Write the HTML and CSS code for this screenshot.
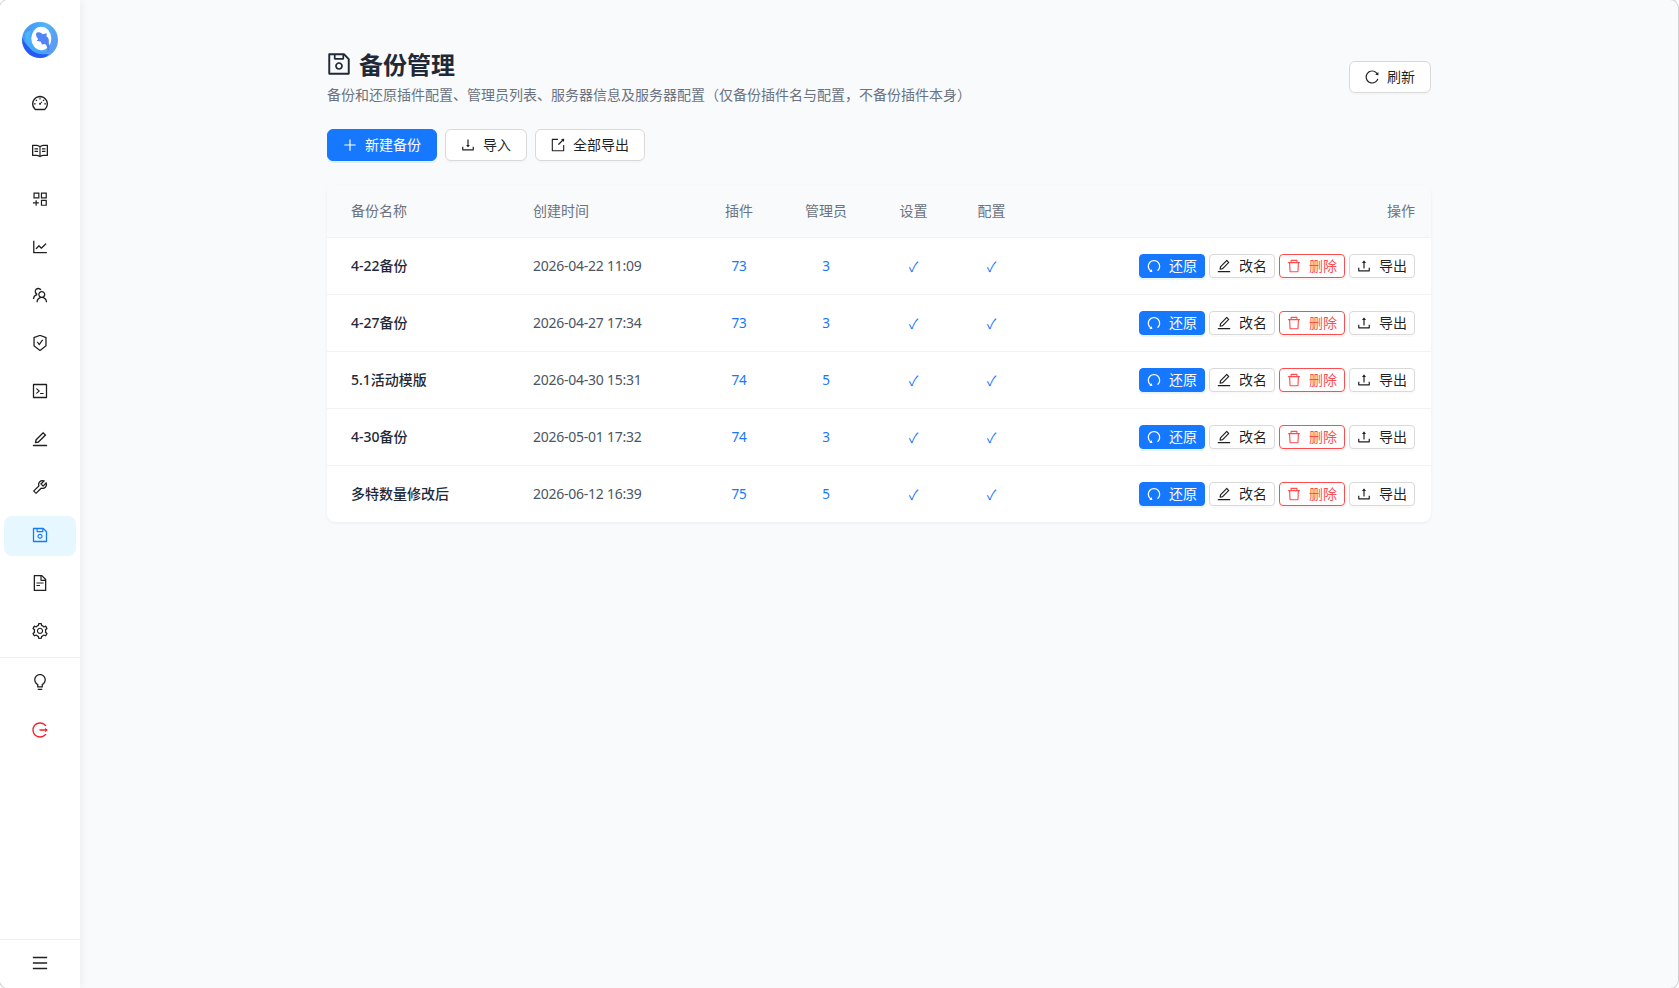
FILE: index.html
```html
<!DOCTYPE html>
<html lang="zh-CN">
<head>
<meta charset="UTF-8">
<meta name="viewport" content="width=device-width, initial-scale=1.0">
<title>备份管理</title>
<link rel="stylesheet" href="styles.css">
</head>
<body>
<svg class="sprite" xmlns="http://www.w3.org/2000/svg">
  <symbol id="i-dashboard" viewBox="64 64 896 896"><path d="M924.8 385.6a446.7 446.7 0 00-96-142.4 446.7 446.7 0 00-142.4-96C631.1 123.8 572.5 112 512 112s-119.1 11.8-174.4 35.2a446.7 446.7 0 00-142.4 96 446.7 446.7 0 00-96 142.4C75.8 440.9 64 499.5 64 560c0 132.7 58.3 257.7 159.9 343.1l1.7 1.4c5.8 4.8 13.1 7.5 20.6 7.5h531.7c7.5 0 14.8-2.7 20.6-7.5l1.7-1.4C901.7 817.7 960 692.7 960 560c0-60.5-11.9-119.1-35.2-174.4zM761.4 836H262.6A371.12 371.12 0 01140 560c0-99.4 38.7-192.8 109-263 70.3-70.3 163.7-109 263-109 99.4 0 192.8 38.7 263 109 70.3 70.3 109 163.7 109 263 0 105.6-44.5 205.5-122.6 276zM623.5 421.5a8.03 8.03 0 00-11.3 0L527.7 506c-18.7-5-39.4-.2-54.1 14.5a55.95 55.95 0 000 79.2 55.95 55.95 0 0079.2 0 55.87 55.87 0 0014.5-54.1l84.5-84.5c3.1-3.1 3.1-8.2 0-11.3l-28.3-28.3zM490 320h44c4.4 0 8-3.6 8-8v-80c0-4.4-3.6-8-8-8h-44c-4.4 0-8 3.6-8 8v80c0 4.4 3.6 8 8 8zm260 218v44c0 4.4 3.6 8 8 8h80c4.4 0 8-3.6 8-8v-44c0-4.4-3.6-8-8-8h-80c-4.4 0-8 3.6-8 8zm12.7-197.2l-31.1-31.1a8.03 8.03 0 00-11.3 0l-56.6 56.6a8.03 8.03 0 000 11.3l31.1 31.1c3.1 3.1 8.2 3.1 11.3 0l56.6-56.6c3.1-3.1 3.1-8.2 0-11.3zm-458.6-31.1a8.03 8.03 0 00-11.3 0l-31.1 31.1a8.03 8.03 0 000 11.3l56.6 56.6c3.1 3.1 8.2 3.1 11.3 0l31.1-31.1c3.1-3.1 3.1-8.2 0-11.3l-56.6-56.6zM262 530h-80c-4.4 0-8 3.6-8 8v44c0 4.4 3.6 8 8 8h80c4.4 0 8-3.6 8-8v-44c0-4.4-3.6-8-8-8z"/></symbol>
  <symbol id="i-read" viewBox="64 64 896 896"><path d="M928 161H699.2c-49.1 0-97.1 14.1-138.4 40.7L512 233l-48.8-31.3A255.2 255.2 0 00324.8 161H96c-17.7 0-32 14.3-32 32v568c0 17.7 14.3 32 32 32h228.8c49.1 0 97.1 14.1 138.4 40.7l44.4 28.6c1.3.8 2.8 1.3 4.3 1.3s3-.4 4.3-1.3l44.4-28.6C602 807.1 650.1 793 699.2 793H928c17.7 0 32-14.3 32-32V193c0-17.7-14.3-32-32-32zM324.8 721H136V233h188.8c35.4 0 69.8 10.1 99.5 29.2l48.8 31.3 6.9 4.5v462c-47.6-25.6-100.8-39-155.2-39zm563.2 0H699.2c-54.4 0-107.6 13.4-155.2 39V298l6.9-4.5 48.8-31.3c29.7-19.1 64.1-29.2 99.5-29.2H888v488zM396.9 361H211.1c-3.9 0-7.1 3.4-7.1 7.5v45c0 4.1 3.2 7.5 7.1 7.5h185.7c3.9 0 7.1-3.4 7.1-7.5v-45c.1-4.1-3.1-7.5-7-7.5zm223.1 7.5v45c0 4.1 3.2 7.5 7.1 7.5h185.7c3.9 0 7.1-3.4 7.1-7.5v-45c0-4.1-3.2-7.5-7.1-7.5H627.1c-3.9 0-7.1 3.4-7.1 7.5zM396.9 501H211.1c-3.9 0-7.1 3.4-7.1 7.5v45c0 4.1 3.2 7.5 7.1 7.5h185.7c3.9 0 7.1-3.4 7.1-7.5v-45c.1-4.1-3.1-7.5-7-7.5zm416 0H627.1c-3.9 0-7.1 3.4-7.1 7.5v45c0 4.1 3.2 7.5 7.1 7.5h185.7c3.9 0 7.1-3.4 7.1-7.5v-45c.1-4.1-3.1-7.5-7-7.5z"/></symbol>
  <symbol id="i-apps" viewBox="64 64 896 896"><path fill-rule="evenodd" d="M160 144h304q16 0 16 16v304q0 16-16 16H160q-16 0-16-16V160q0-16 16-16zm52 68v200h200V212zM576 144h304q16 0 16 16v304q0 16-16 16H576q-16 0-16-16V160q0-16 16-16zm52 68v200h200V212zM576 560h304q16 0 16 16v304q0 16-16 16H576q-16 0-16-16V576q0-16 16-16zm52 68v200h200V628zM262 584h68v114h116v68H330v118h-68V766H114v-68h148z"/></symbol>
  <symbol id="i-chart" viewBox="64 64 896 896"><path d="M888 792H200V168c0-4.4-3.6-8-8-8h-56c-4.4 0-8 3.6-8 8v688c0 4.4 3.6 8 8 8h752c4.4 0 8-3.6 8-8v-56c0-4.4-3.6-8-8-8zM305.8 637.7c3.1 3.1 8.1 3.1 11.3 0l138.3-137.6L583 628.5c3.1 3.1 8.2 3.1 11.3 0l275.4-275.3c3.1-3.1 3.1-8.2 0-11.3l-39.6-39.6a8.03 8.03 0 00-11.3 0l-230 229.9L461.4 404a8.03 8.03 0 00-11.3 0L266.3 586.7a8.03 8.03 0 000 11.3l39.5 39.7z"/></symbol>
  <symbol id="i-team" viewBox="64 64 896 896"><path d="M824.2 699.9a301.55 301.55 0 00-86.4-60.4C783.1 602.8 812 546.8 812 484c0-110.8-92.4-201.7-203.2-200-109.1 1.7-197 90.6-197 200 0 62.8 29 118.8 74.2 155.5a300.95 300.95 0 00-86.4 60.4C345 754.6 314 826.8 312 903.8a8 8 0 008 8.2h56c4.3 0 7.9-3.4 8-7.7 1.9-58 25.4-112.3 66.7-153.5A226.62 226.62 0 01612 684c60.9 0 118.2 23.7 161.3 66.8C814.6 792 838 846.3 840 904.3c.1 4.3 3.7 7.7 8 7.7h56a8 8 0 008-8.2c-2-77-33-149.2-87.8-203.9zM612 612c-34.2 0-66.4-13.3-90.5-37.5a126.86 126.86 0 01-37.5-91.8c.3-32.8 13.4-64.5 36.3-88 24-24.6 56.1-38.3 90.4-38.7 33.9-.3 66.8 12.9 91 36.6 24.8 24.3 38.4 56.8 38.4 91.4 0 34.2-13.3 66.3-37.5 90.5A127.3 127.3 0 01612 612zM361.5 510.4c-.9-8.7-1.4-17.5-1.4-26.4 0-15.9 1.5-31.4 4.3-46.5.7-3.6-1.2-7.3-4.5-8.8-13.6-6.1-26.1-14.5-36.9-25.1a127.54 127.54 0 01-38.7-95.4c.9-32.1 13.8-62.6 36.3-85.6 24.7-25.3 57.9-39.1 93.2-38.7 31.9.3 62.7 12.6 86 34.4 7.9 7.4 14.7 15.6 20.4 24.4 2 3.1 5.9 4.4 9.3 3.2 17.6-6.1 36.2-10.4 55.3-12.4 5.6-.6 8.8-6.6 6.3-11.6-32.5-64.3-98.9-108.7-175.7-109.9-110.9-1.7-203.3 89.2-203.3 199.9 0 62.8 28.9 118.8 74.2 155.5-31.8 14.7-61.1 35-86.5 60.4-54.8 54.7-85.8 126.9-87.8 204a8 8 0 008 8.2h56.1c4.3 0 7.9-3.4 8-7.7 1.9-58 25.4-112.3 66.7-153.5 29.4-29.4 65.4-49.8 104.7-59.7 3.9-1 6.5-4.7 6-8.7z"/></symbol>
  <symbol id="i-shield" viewBox="64 64 896 896"><path d="M866.9 169.9L527.1 54.1C523 52.7 517.5 52 512 52s-11 .7-15.1 2.1L157.1 169.9c-8.3 2.8-15.1 12.4-15.1 21.2v482.4c0 8.8 5.7 20.4 12.6 25.9L499.3 968c3.5 2.7 8 4.1 12.6 4.1s9.2-1.4 12.6-4.1l344.7-268.6c6.9-5.4 12.6-17 12.6-25.9V191.1c.2-8.8-6.6-18.3-14.9-21.2zM810 654.3L512 886.5 214 654.3V226.7l298-101.6 298 101.6v427.6zm-405.8-201c-3-4.1-7.8-6.6-13-6.6H336c-6.5 0-10.3 7.4-6.5 12.7l126.4 174a16.1 16.1 0 0026 0l212.6-292.7c3.8-5.3 0-12.7-6.5-12.7h-55.2c-5.1 0-10 2.5-13 6.6L468.9 542.4l-64.7-89.1z"/></symbol>
  <symbol id="i-code" viewBox="64 64 896 896"><path d="M516 673c0 4.4 3.4 8 7.5 8h185c4.1 0 7.5-3.6 7.5-8v-48c0-4.4-3.4-8-7.5-8h-185c-4.1 0-7.5 3.6-7.5 8v48zm-194.9 6.1l192-161c3.8-3.2 3.8-9.1 0-12.3l-192-160.9A7.95 7.95 0 00308 351v62.7c0 2.4 1 4.6 2.9 6.1L420.7 512l-109.8 92.2a8.1 8.1 0 00-2.9 6.1V673c0 6.8 7.9 10.5 13.1 6.1zM880 112H144c-17.7 0-32 14.3-32 32v736c0 17.7 14.3 32 32 32h736c17.7 0 32-14.3 32-32V144c0-17.7-14.3-32-32-32zm-40 728H184V184h656v656z"/></symbol>
  <symbol id="i-edit" viewBox="64 64 896 896"><path d="M257.7 752c2 0 4-.2 6-.5L431.9 722c2-.4 3.9-1.3 5.3-2.8l423.9-423.9a9.96 9.96 0 000-14.1L694.9 114.9c-1.9-1.9-4.4-2.9-7.1-2.9s-5.2 1-7.1 2.9L256.8 538.8c-1.5 1.5-2.4 3.3-2.8 5.3l-29.5 168.2a33.5 33.5 0 009.4 29.8c6.6 6.4 14.9 9.9 23.8 9.9zm67.4-174.4L687.8 215l73.3 73.3-362.7 362.6-88.9 15.7 15.6-89zM880 836H144c-17.7 0-32 14.3-32 32v36c0 4.4 3.6 8 8 8h784c4.4 0 8-3.6 8-8v-36c0-17.7-14.3-32-32-32z"/></symbol>
  <symbol id="i-tool" viewBox="64 64 896 896"><path d="M876.6 239.5c-.5-.9-1.2-1.8-2-2.5-5-5-13.1-5-18.1 0L684.2 409.3l-67.9-67.9L788.7 169c.8-.8 1.4-1.6 2-2.5 3.6-6.1 1.6-13.9-4.5-17.5-98.2-58-226.8-44.7-311.3 39.7-67 67-89.2 162-66.5 247.4l-293 293c-3 3-2.8 7.9.3 11l169.7 169.7c3.1 3.1 8.1 3.3 11 .3l292.9-292.9c85.5 22.8 180.5.7 247.6-66.4 84.4-84.5 97.7-213.1 39.7-311.3zM786 499.8c-58.1 58.1-145.3 69.3-214.6 33.6l-8.8 8.8-.1-.1-274 274.1-79.2-79.2 230.1-230.1s0 .1.1.1l52.8-52.8c-35.7-69.3-24.5-156.5 33.6-214.6a184.2 184.2 0 01144-53.5L537 318.9a32.05 32.05 0 000 45.3l124.5 124.5a32.05 32.05 0 0045.3 0l132.8-132.8c3.7 51.8-14.4 104.8-53.6 143.9z"/></symbol>
  <symbol id="i-save" viewBox="64 64 896 896"><path d="M893.3 293.3L730.7 130.7c-7.5-7.5-16.7-13-26.7-16V112H144c-17.7 0-32 14.3-32 32v736c0 17.7 14.3 32 32 32h736c17.7 0 32-14.3 32-32V338.5c0-17-6.7-33.2-18.7-45.2zM384 184h256v104H384V184zm456 656H184V184h136v136c0 17.7 14.3 32 32 32h320c17.7 0 32-14.3 32-32V205.8l136 136V840zM512 442c-79.5 0-144 64.5-144 144s64.5 144 144 144 144-64.5 144-144-64.5-144-144-144zm0 224c-44.2 0-80-35.8-80-80s35.8-80 80-80 80 35.8 80 80-35.8 80-80 80z"/></symbol>
  <symbol id="i-file" viewBox="64 64 896 896"><path d="M854.6 288.6L639.4 73.4c-6-6-14.1-9.4-22.6-9.4H192c-17.7 0-32 14.3-32 32v832c0 17.7 14.3 32 32 32h640c17.7 0 32-14.3 32-32V311.3c0-8.5-3.4-16.7-9.4-22.7zM790.2 326H602V137.8L790.2 326zm1.8 562H232V136h302v216a42 42 0 0042 42h216v494zM504 618H320c-4.4 0-8 3.6-8 8v48c0 4.4 3.6 8 8 8h184c4.4 0 8-3.6 8-8v-48c0-4.4-3.6-8-8-8zM312 490v48c0 4.4 3.6 8 8 8h384c4.4 0 8-3.6 8-8v-48c0-4.4-3.6-8-8-8H320c-4.4 0-8 3.6-8 8z"/></symbol>
  <symbol id="i-setting" viewBox="64 64 896 896"><path d="M924.8 625.7l-65.5-56c3.1-19 4.7-38.4 4.7-57.8s-1.6-38.8-4.7-57.8l65.5-56a32.03 32.03 0 009.3-35.2l-.9-2.6a443.74 443.74 0 00-79.7-137.9l-1.8-2.1a32.12 32.12 0 00-35.1-9.5l-81.3 28.9c-30-24.6-63.5-44-99.7-57.6l-15.7-85a32.05 32.05 0 00-25.8-25.7l-2.7-.5c-52.1-9.4-106.9-9.4-159 0l-2.7.5a32.05 32.05 0 00-25.8 25.7l-15.8 85.4a351.86 351.86 0 00-99 57.4l-81.9-29.1a32 32 0 00-35.1 9.5l-1.8 2.1a446.02 446.02 0 00-79.7 137.9l-.9 2.6c-4.5 12.5-.8 26.5 9.3 35.2l66.3 56.6c-3.1 18.8-4.6 38-4.6 57.1 0 19.2 1.5 38.4 4.6 57.1L99 625.5a32.03 32.03 0 00-9.3 35.2l.9 2.6c18.1 50.4 44.9 96.9 79.7 137.9l1.8 2.1a32.12 32.12 0 0035.1 9.5l81.9-29.1c29.8 24.5 63.1 43.9 99 57.4l15.8 85.4a32.05 32.05 0 0025.8 25.7l2.7.5a449.4 449.4 0 00159 0l2.7-.5a32.05 32.05 0 0025.8-25.7l15.7-85a350 350 0 0099.7-57.6l81.3 28.9a32 32 0 0035.1-9.5l1.8-2.1c34.8-41.1 61.6-87.5 79.7-137.9l.9-2.6c4.5-12.3.8-26.3-9.3-35zM788.3 465.9c2.5 15.1 3.8 30.6 3.8 46.1s-1.3 31-3.8 46.1l-6.6 40.1 74.7 63.9a370.03 370.03 0 01-42.6 73.6L721 702.8l-31.4 25.8c-23.9 19.6-50.5 35-79.3 45.8l-38.1 14.3-17.9 97a377.5 377.5 0 01-85 0l-17.9-97.2-37.8-14.5c-28.5-10.8-55-26.2-78.7-45.7l-31.4-25.9-93.4 33.2c-17-22.9-31.2-47.6-42.6-73.6l75.5-64.5-6.5-40c-2.4-14.9-3.7-30.3-3.7-45.5 0-15.3 1.2-30.6 3.7-45.5l6.5-40-75.5-64.5c11.3-26.1 25.6-50.7 42.6-73.6l93.4 33.2 31.4-25.9c23.7-19.5 50.2-34.9 78.7-45.7l37.9-14.3 17.9-97.2c28.1-3.2 56.8-3.2 85 0l17.9 97 38.1 14.3c28.7 10.8 55.4 26.2 79.3 45.8l31.4 25.8 92.8-32.9c17 22.9 31.2 47.6 42.6 73.6L781.8 426l6.5 39.9zM512 326c-97.2 0-176 78.8-176 176s78.8 176 176 176 176-78.8 176-176-78.8-176-176-176zm79.2 255.2A111.6 111.6 0 01512 614c-29.9 0-58-11.7-79.2-32.8A111.6 111.6 0 01400 502c0-29.9 11.7-58 32.8-79.2C454 401.6 482.1 390 512 390c29.9 0 58 11.6 79.2 32.8A111.6 111.6 0 01624 502c0 29.9-11.7 58-32.8 79.2z"/></symbol>
  <symbol id="i-bulb" viewBox="64 64 896 896"><path d="M632 888H392c-4.4 0-8 3.6-8 8v32c0 17.7 14.3 32 32 32h192c17.7 0 32-14.3 32-32v-32c0-4.4-3.6-8-8-8zM512 64c-181.1 0-328 146.9-328 328 0 121.4 66 227.4 164 284.1V792c0 17.7 14.3 32 32 32h264c17.7 0 32-14.3 32-32V676.1c98-56.7 164-162.7 164-284.1 0-181.1-146.9-328-328-328zm127.9 549.8L604 634.6V752H420V634.6l-35.9-20.8C305.4 568.3 256 484.5 256 392c0-141.4 114.6-256 256-256s256 114.6 256 256c0 92.5-49.4 176.3-128.1 221.8z"/></symbol>
  <symbol id="i-logout" viewBox="64 64 896 896"><path d="M868 732h-70.3c-4.8 0-9.3 2.1-12.3 5.8-7 8.5-14.5 16.7-22.4 24.5a353.84 353.84 0 01-112.7 75.9A352.8 352.8 0 01512.4 866c-47.9 0-94.3-9.4-137.9-27.8a353.84 353.84 0 01-112.7-75.9 353.28 353.28 0 01-76-112.5C167.3 606.2 158 559.9 158 512s9.4-94.2 27.8-137.8c17.8-42.1 43.4-80 76-112.5s70.5-58.1 112.7-75.9c43.6-18.4 90-27.8 137.9-27.8 47.9 0 94.3 9.3 137.9 27.8 42.2 17.8 80.1 43.4 112.7 75.9 7.9 7.9 15.3 16.1 22.4 24.5 3 3.7 7.6 5.8 12.3 5.8H868c6.3 0 10.2-7 6.7-12.3C798 160.5 663.8 81.6 511.3 82 271.7 82.6 79.6 277.1 82 516.4 84.4 751.9 276.2 942 512.4 942c152.1 0 285.7-78.8 362.3-197.7 3.4-5.3-.4-12.3-6.7-12.3zm88.9-226.3L815 393.7c-5.3-4.2-13-.4-13 6.3v76H488c-4.4 0-8 3.6-8 8v56c0 4.4 3.6 8 8 8h314v76c0 6.7 7.8 10.5 13 6.3l141.9-112a8 8 0 000-12.6z"/></symbol>
  <symbol id="i-menu" viewBox="64 64 896 896"><path d="M904 160H120c-4.4 0-8 3.6-8 8v64c0 4.4 3.6 8 8 8h784c4.4 0 8-3.6 8-8v-64c0-4.4-3.6-8-8-8zm0 624H120c-4.4 0-8 3.6-8 8v64c0 4.4 3.6 8 8 8h784c4.4 0 8-3.6 8-8v-64c0-4.4-3.6-8-8-8zm0-312H120c-4.4 0-8 3.6-8 8v64c0 4.4 3.6 8 8 8h784c4.4 0 8-3.6 8-8v-64c0-4.4-3.6-8-8-8z"/></symbol>
  <symbol id="i-reload" viewBox="64 64 896 896"><path d="M909.1 209.3l-56.4 44.1C775.8 155.1 656.2 92 521.9 92 290 92 102.3 279.5 102 511.5 101.7 743.7 289.8 932 521.9 932c181.3 0 335.8-115 394.6-276.1 1.5-4.2-.7-8.9-4.9-10.3l-56.7-19.5a8 8 0 00-10.1 4.8c-1.8 5-3.8 10-5.9 14.9-17.3 41-42.1 77.8-73.7 109.4A344.77 344.77 0 01655.9 829c-42.3 17.9-87.4 27-133.8 27-46.5 0-91.5-9.1-133.8-27A341.5 341.5 0 01279 755.2a342.16 342.16 0 01-73.7-109.4c-17.9-42.4-27-87.4-27-133.9s9.1-91.5 27-133.9c17.3-41 42.1-77.8 73.7-109.4 31.6-31.6 68.4-56.4 109.3-73.8 42.3-17.9 87.4-27 133.8-27 46.5 0 91.5 9.1 133.8 27a341.5 341.5 0 01109.3 73.8c9.9 9.9 19.2 20.4 27.8 31.4l-60.2 47a8 8 0 003 14.1l175.6 43c5 1.2 9.9-2.6 9.9-7.7l.8-180.9c-.1-6.6-7.8-10.3-13-6.2z"/></symbol>
  <symbol id="i-plus" viewBox="64 64 896 896"><path d="M482 152h60q8 0 8 8v704q0 8-8 8h-60q-8 0-8-8V160q0-8 8-8z"/><path d="M192 474h672q8 0 8 8v60q0 8-8 8H160q-8 0-8-8v-60q0-8 8-8z"/></symbol>
  <symbol id="i-download" viewBox="64 64 896 896"><path d="M505.7 661a8 8 0 0012.6 0l112-141.7c4.1-5.2.4-12.9-6.3-12.9h-74.1V168c0-4.4-3.6-8-8-8h-60c-4.4 0-8 3.6-8 8v338.3H400c-6.7 0-10.4 7.7-6.3 12.9l112 141.8zM878 626h-60c-4.4 0-8 3.6-8 8v154H214V634c0-4.4-3.6-8-8-8h-60c-4.4 0-8 3.6-8 8v198c0 17.7 14.3 32 32 32h684c17.7 0 32-14.3 32-32V634c0-4.4-3.6-8-8-8z"/></symbol>
  <symbol id="i-upload" viewBox="64 64 896 896"><path d="M400 317.7h73.9V656c0 4.4 3.6 8 8 8h60c4.4 0 8-3.6 8-8V317.7H624c6.7 0 10.4-7.7 6.3-12.9L518.3 163a8 8 0 00-12.6 0l-112 141.7c-4.1 5.3-.4 13 6.3 13zM878 626h-60c-4.4 0-8 3.6-8 8v154H214V634c0-4.4-3.6-8-8-8h-60c-4.4 0-8 3.6-8 8v198c0 17.7 14.3 32 32 32h684c17.7 0 32-14.3 32-32V634c0-4.4-3.6-8-8-8z"/></symbol>
  <symbol id="i-export" viewBox="64 64 896 896"><path d="M880 912H144c-17.7 0-32-14.3-32-32V144c0-17.7 14.3-32 32-32h360c4.4 0 8 3.6 8 8v56c0 4.4-3.6 8-8 8H184v656h656V520c0-4.4 3.6-8 8-8h56c4.4 0 8 3.6 8 8v360c0 17.7-14.3 32-32 32zM770.87 199.13l-52.2-52.2a8.01 8.01 0 014.7-13.6l179.4-21c5.1-.6 9.5 3.7 8.9 8.9l-21 179.4c-.8 6.6-8.9 9.4-13.6 4.7l-52.4-52.4-256.2 256.2a8.03 8.03 0 01-11.3 0l-42.4-42.4a8.03 8.03 0 010-11.3l256.1-256.3z"/></symbol>
  <symbol id="i-undo" viewBox="64 64 896 896"><path d="M511.4 124C290.5 124.3 112 303 112 523.9c0 128 60.2 242 153.8 315.2l-37.5 48c-4.1 5.3-.3 13 6.3 12.9l167-.8c5.2 0 9-4.9 7.7-9.9L369.8 727a8 8 0 00-14.1-3L315 776.1c-10.2-8-20-16.7-29.3-26a318.64 318.64 0 01-68.6-101.7C200.4 609 192 567.1 192 523.9s8.4-85.1 25.1-124.5c16.1-38.1 39.2-72.3 68.6-101.7 29.4-29.4 63.6-52.5 101.7-68.6C426.9 212.4 468.8 204 512 204s85.1 8.4 124.5 25.1c38.1 16.1 72.3 39.2 101.7 68.6 29.4 29.4 52.5 63.6 68.6 101.7 16.7 39.4 25.1 81.3 25.1 124.5s-8.4 85.1-25.1 124.5a318.64 318.64 0 01-68.6 101.7c-7.5 7.5-15.3 14.5-23.4 21.2a7.93 7.93 0 00-1.2 11.1l39.4 50.5c2.8 3.5 7.9 4.1 11.4 1.3C854.5 760.8 912 649.1 912 523.9c0-221.1-179.4-400.2-400.6-399.9z"/></symbol>
  <symbol id="i-delete" viewBox="64 64 896 896"><path d="M360 184h-8c4.4 0 8-3.6 8-8v8h304v-8c0 4.4 3.6 8 8 8h-8v72h72v-80c0-35.3-28.7-64-64-64H352c-35.3 0-64 28.7-64 64v80h72v-72zm504 72H160c-17.7 0-32 14.3-32 32v32c0 4.4 3.6 8 8 8h60.4l24.7 523c1.6 34.1 29.8 61 63.9 61h454c34.2 0 62.3-26.8 63.9-61l24.7-523H888c4.4 0 8-3.6 8-8v-32c0-17.7-14.3-32-32-32zM731.3 840H292.7l-24.2-512h487l-24.2 512z"/></symbol>
</svg>

<div class="app">
  <aside class="sidebar">
    <svg class="logo" viewBox="0 0 36 36">
      <defs>
        <linearGradient id="ring" x1="0" y1="0" x2="1" y2="0.4">
          <stop offset="0" stop-color="#3d8ff2"/>
          <stop offset="0.6" stop-color="#4fb5fb"/>
          <stop offset="1" stop-color="#5a9bf3"/>
        </linearGradient>
        <linearGradient id="wave" x1="0" y1="0" x2="1" y2="1">
          <stop offset="0" stop-color="#4cb9fb"/>
          <stop offset="1" stop-color="#3f9df8"/>
        </linearGradient>
      </defs>
      <circle cx="18" cy="18" r="18" fill="url(#ring)"/>
      <path d="M.3 15C-1 27 8 36 18 36c4 0 7-1.500 9-4-9 1-15-1-19-6C5 23 1.500 20 .3 15z" fill="#2a58f5"/>
      <path d="M3 12c-.5 9 5 17 13 19.500 4 1 8 .5 11-2-7 1-12-1.500-15-6C9 19 7 15 9 9c-3 0-5 1-6 3z" fill="url(#wave)"/>
      <ellipse cx="19.300" cy="16.500" rx="10" ry="11.700" fill="#fff"/>
      <path d="M14 12.200c0-1.600 1.400-2.400 3-1.900 1.500.3 2.500 1 3.800 1.900l3.900-.9-.2 3.100c2 1.400 2.700 3.200 2.300 5.100-.2 2.800 1.200 4.700.6 8-.5 1.300-1.300 2.300-2.300 2.800.8-3.200.4-6.300-2-8.400l-3.200.5-1-2.700-4.200-.9 1.600-1.800c-1.400-1.300-2.300-2.900-2.300-4.800z" fill="#5284f5"/>
    </svg>
    <nav class="nav">
      <a class="nav-item"><svg class="icon"><use href="#i-dashboard"/></svg></a>
      <a class="nav-item"><svg class="icon"><use href="#i-read"/></svg></a>
      <a class="nav-item"><svg class="icon"><use href="#i-apps"/></svg></a>
      <a class="nav-item"><svg class="icon"><use href="#i-chart"/></svg></a>
      <a class="nav-item"><svg class="icon"><use href="#i-team"/></svg></a>
      <a class="nav-item"><svg class="icon"><use href="#i-shield"/></svg></a>
      <a class="nav-item"><svg class="icon"><use href="#i-code"/></svg></a>
      <a class="nav-item"><svg class="icon"><use href="#i-edit"/></svg></a>
      <a class="nav-item"><svg class="icon"><use href="#i-tool"/></svg></a>
      <a class="nav-item active"><svg class="icon"><use href="#i-save"/></svg></a>
      <a class="nav-item"><svg class="icon"><use href="#i-file"/></svg></a>
      <a class="nav-item"><svg class="icon"><use href="#i-setting"/></svg></a>
    </nav>
    <nav class="nav nav-extra">
      <a class="nav-item"><svg class="icon"><use href="#i-bulb"/></svg></a>
      <a class="nav-item logout"><svg class="icon"><use href="#i-logout"/></svg></a>
    </nav>
    <div class="collapse"><svg class="icon"><use href="#i-menu"/></svg></div>
  </aside>

  <main class="main">
    <div class="container">
      <header class="page-header">
        <div>
          <h1 class="title"><svg class="icon"><use href="#i-save"/></svg><span class="title-text">备份管理</span></h1>
          <p class="subtitle">备份和还原插件配置、管理员列表、服务器信息及服务器配置（仅备份插件名与配置，不备份插件本身）</p>
        </div>
        <button class="btn"><svg class="icon"><use href="#i-reload"/></svg>刷新</button>
      </header>

      <div class="toolbar">
        <button class="btn primary"><svg class="icon"><use href="#i-plus"/></svg>新建备份</button>
        <button class="btn"><svg class="icon"><use href="#i-download"/></svg>导入</button>
        <button class="btn"><svg class="icon"><use href="#i-export"/></svg>全部导出</button>
      </div>

      <div class="card">
        <table class="table">
          <colgroup>
            <col class="col-name"><col class="col-time"><col class="col-plugin"><col class="col-admin"><col class="col-set"><col class="col-conf"><col>
          </colgroup>
          <thead>
            <tr><th class="name">备份名称</th><th>创建时间</th><th class="num">插件</th><th class="num">管理员</th><th class="num">设置</th><th class="num">配置</th><th class="ops">操作</th></tr>
          </thead>
          <tbody>
            <tr>
              <td class="name">4-22备份</td><td class="time">2026-04-22 11:09</td><td class="num">73</td><td class="num">3</td><td class="num check">✓</td><td class="num check">✓</td>
              <td><div class="actions">
                <button class="btn small primary"><svg class="icon"><use href="#i-undo"/></svg>还原</button>
                <button class="btn small"><svg class="icon"><use href="#i-edit"/></svg>改名</button>
                <button class="btn small danger"><svg class="icon"><use href="#i-delete"/></svg>删除</button>
                <button class="btn small"><svg class="icon"><use href="#i-upload"/></svg>导出</button>
              </div></td>
            </tr>
            <tr>
              <td class="name">4-27备份</td><td class="time">2026-04-27 17:34</td><td class="num">73</td><td class="num">3</td><td class="num check">✓</td><td class="num check">✓</td>
              <td><div class="actions">
                <button class="btn small primary"><svg class="icon"><use href="#i-undo"/></svg>还原</button>
                <button class="btn small"><svg class="icon"><use href="#i-edit"/></svg>改名</button>
                <button class="btn small danger"><svg class="icon"><use href="#i-delete"/></svg>删除</button>
                <button class="btn small"><svg class="icon"><use href="#i-upload"/></svg>导出</button>
              </div></td>
            </tr>
            <tr>
              <td class="name">5.1活动模版</td><td class="time">2026-04-30 15:31</td><td class="num">74</td><td class="num">5</td><td class="num check">✓</td><td class="num check">✓</td>
              <td><div class="actions">
                <button class="btn small primary"><svg class="icon"><use href="#i-undo"/></svg>还原</button>
                <button class="btn small"><svg class="icon"><use href="#i-edit"/></svg>改名</button>
                <button class="btn small danger"><svg class="icon"><use href="#i-delete"/></svg>删除</button>
                <button class="btn small"><svg class="icon"><use href="#i-upload"/></svg>导出</button>
              </div></td>
            </tr>
            <tr>
              <td class="name">4-30备份</td><td class="time">2026-05-01 17:32</td><td class="num">74</td><td class="num">3</td><td class="num check">✓</td><td class="num check">✓</td>
              <td><div class="actions">
                <button class="btn small primary"><svg class="icon"><use href="#i-undo"/></svg>还原</button>
                <button class="btn small"><svg class="icon"><use href="#i-edit"/></svg>改名</button>
                <button class="btn small danger"><svg class="icon"><use href="#i-delete"/></svg>删除</button>
                <button class="btn small"><svg class="icon"><use href="#i-upload"/></svg>导出</button>
              </div></td>
            </tr>
            <tr>
              <td class="name">多特数量修改后</td><td class="time">2026-06-12 16:39</td><td class="num">75</td><td class="num">5</td><td class="num check">✓</td><td class="num check">✓</td>
              <td><div class="actions">
                <button class="btn small primary"><svg class="icon"><use href="#i-undo"/></svg>还原</button>
                <button class="btn small"><svg class="icon"><use href="#i-edit"/></svg>改名</button>
                <button class="btn small danger"><svg class="icon"><use href="#i-delete"/></svg>删除</button>
                <button class="btn small"><svg class="icon"><use href="#i-upload"/></svg>导出</button>
              </div></td>
            </tr>
          </tbody>
        </table>
      </div>
    </div>
  </main>
</div>
</body>
</html>
```
FILE: styles.css
```css
* {
  box-sizing: border-box;
}
body {
  margin: 0;
  overflow: hidden;
  background: #fff;
  color: rgba(0, 0, 0, 0.88);
  font-family: "Noto Sans", "Noto Sans CJK SC", sans-serif;
  font-size: 14px;
  line-height: 22px;
}
.sprite {
  display: none;
}
.icon {
  display: block;
  width: 1em;
  height: 1em;
  fill: currentColor;
  flex: none;
}
.app {
  display: flex;
  height: 100vh;
  margin-right: 1px;
  overflow: hidden;
  background: #f8fafc;
  border-radius: 8px;
  box-shadow: 0 0 0 1px #cfcfd1;
}

/* sidebar */
.sidebar {
  display: flex;
  flex-direction: column;
  width: 80px;
  flex: none;
  background: #fff;
  box-shadow: 2px 0 8px rgba(0, 0, 0, 0.05);
}
.logo {
  width: 36px;
  height: 36px;
  margin: 22px auto 26px;
  flex: none;
}
.nav {
  display: flex;
  flex-direction: column;
  gap: 8px;
  padding: 0 4px;
}
.nav-item {
  display: flex;
  align-items: center;
  justify-content: center;
  height: 40px;
  padding-bottom: 2px;
  border-radius: 8px;
  font-size: 16px;
}
.nav-item.active {
  background: #e6f7ff;
  color: #1677ff;
}
.nav-item.logout {
  color: #f5222d;
}
.nav-extra {
  margin-top: 5px;
  padding-top: 5px;
  border-top: 1px solid #f0f0f0;
}
.collapse {
  display: flex;
  align-items: center;
  justify-content: center;
  height: 49px;
  margin-top: auto;
  padding-bottom: 2px;
  border-top: 1px solid #f0f0f0;
  font-size: 16px;
}

/* content */
.main {
  flex: 1;
}
.container {
  width: 1104px;
  margin: 0 auto;
  padding-top: 48px;
}
.page-header {
  display: flex;
  justify-content: space-between;
  align-items: center;
  height: 57px;
}
.title {
  display: flex;
  align-items: center;
  gap: 8px;
  margin: 0;
  color: #1f2937;
  font-size: 24px;
  line-height: 32px;
  font-weight: 700;
}
.title-text {
  padding-top: 2px;
  line-height: 30px;
}
.subtitle {
  margin: 4px 0 -1px;
  color: #6b7280;
}
.toolbar {
  display: flex;
  gap: 8px;
  margin: 24px 0;
}
.btn {
  display: flex;
  align-items: center;
  gap: 8px;
  height: 32px;
  padding: 0 15px;
  border: 1px solid #d9d9d9;
  border-radius: 6px;
  background: #fff;
  color: rgba(0, 0, 0, 0.88);
  font: inherit;
  white-space: nowrap;
  box-shadow: 0 2px 0 rgba(0, 0, 0, 0.02);
}
.btn.primary {
  border-color: #1677ff;
  background: #1677ff;
  color: #fff;
  box-shadow: 0 2px 0 rgba(5, 145, 255, 0.1);
}
.btn.danger {
  border-color: #ff4d4f;
  color: #ff4d4f;
  box-shadow: 0 2px 0 rgba(255, 38, 5, 0.06);
}
.btn.small {
  height: 24px;
  padding: 0 7px;
  border-radius: 4px;
}

/* table */
.card {
  overflow: hidden;
  border-radius: 8px;
  background: #fff;
  box-shadow: 0 1px 3px rgba(0, 0, 0, 0.06);
}
.table {
  width: 100%;
  table-layout: fixed;
  border-collapse: separate;
  border-spacing: 0;
}
.col-name { width: 190px; }
.col-time { width: 183px; }
.col-plugin { width: 78px; }
.col-admin { width: 96px; }
.col-set { width: 79px; }
.col-conf { width: 77px; }
.table th {
  height: 53px;
  padding: 0 16px;
  border-bottom: 1px solid #f0f2f4;
  background: #f8fafc;
  color: #6b7280;
  font-weight: 400;
  text-align: left;
}
.table td {
  height: 57px;
  padding: 0 16px;
  border-bottom: 1px solid #f0f2f4;
}
.table tr:last-child td {
  height: 56px;
  border-bottom: 0;
}
.table tr:last-child th {
  border-bottom: 1px solid #f0f2f4;
}
.table .name {
  padding-left: 24px;
}
.table td.name {
  color: #1f2937;
  font-weight: 500;
}
.table .time {
  color: #4b5563;
  letter-spacing: -0.25px;
}
.table .num {
  padding: 0;
  text-align: center;
}
.table td.num {
  color: #1677ff;
  font-size: 13.5px;
  letter-spacing: -0.3px;
}
.table td.check {
  font-family: "Noto Sans CJK SC", sans-serif;
  font-size: 14px;
  letter-spacing: 0;
}
.table .ops {
  text-align: right;
}
.actions {
  display: flex;
  justify-content: flex-end;
  gap: 4px;
}
```
